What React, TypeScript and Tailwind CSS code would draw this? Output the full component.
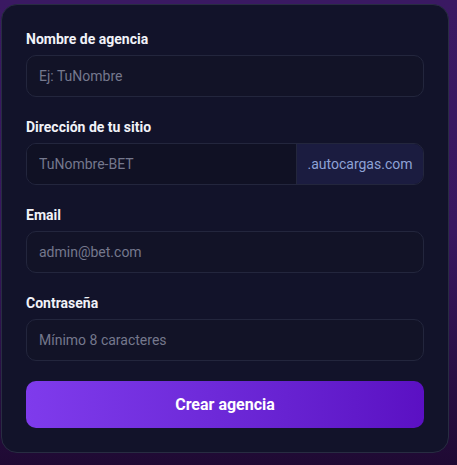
import React from "react";

function Field({ label, placeholder, suffix }: { label: string; placeholder: string; suffix?: string }) {
  return (
    <div>
      <label className="block text-[14px] leading-[20px] font-bold text-[#f1f2f8] mb-[6px]">{label}</label>
      {suffix ? (
        <div className="flex h-[42px] rounded-[10px] border border-[#23263d] overflow-hidden">
          <input
            className="flex-1 min-w-0 bg-[#101124] px-[12px] text-[14px] text-white placeholder:text-[#75788d] outline-none"
            placeholder={placeholder}
          />
          <div className="w-[127px] flex items-center justify-center bg-[#1b1c40] border-l border-[#23263d] text-[14px] text-[#8ea2d6]">
            {suffix}
          </div>
        </div>
      ) : (
        <input
          className="block w-full h-[42px] rounded-[10px] border border-[#23263d] bg-[#121327] px-[12px] text-[14px] text-white placeholder:text-[#75788d] outline-none"
          placeholder={placeholder}
        />
      )}
    </div>
  );
}

export default function App() {
  return (
    <div
      className="w-[457px] h-[465px] bg-gradient-to-b from-[#3a1962] via-[#38175f] to-[#1f0a33] pt-[4px] pl-[1px]"
      style={{ fontFamily: 'Roboto, "Noto Sans", sans-serif' }}
    >
      <div className="w-[448px] h-[449px] rounded-[16px] border border-[#282c42] bg-[#12132a] p-[24px] flex flex-col gap-[20px]">
        <Field label="Nombre de agencia" placeholder="Ej: TuNombre" />
        <Field label="Dirección de tu sitio" placeholder="TuNombre-BET" suffix=".autocargas.com" />
        <Field label="Email" placeholder="admin@bet.com" />
        <Field label="Contraseña" placeholder="Mínimo 8 caracteres" />
        <button className="h-[47px] w-full rounded-[10px] bg-gradient-to-r from-[#7f3bec] to-[#5b10c3] text-white text-[16px] font-bold">
          Crear agencia
        </button>
      </div>
    </div>
  );
}
